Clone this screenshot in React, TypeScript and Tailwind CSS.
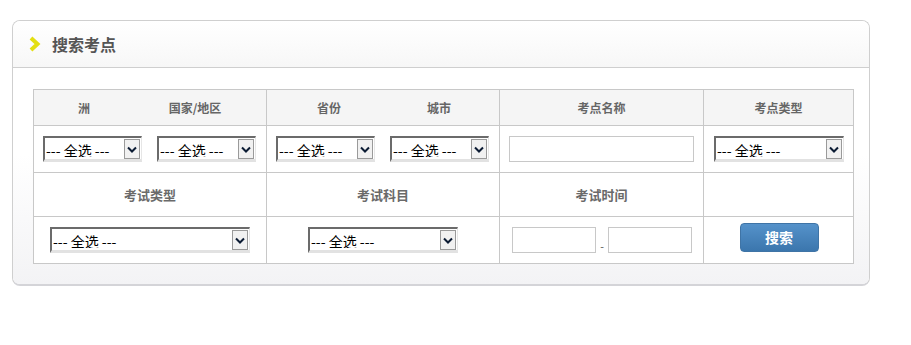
import type { ReactNode } from 'react';

const cjk = "font-['Noto_Sans_CJK_SC','Noto_Sans',sans-serif]";

function Sel({ w }: { w: string }) {
  return (
    <div className={`relative h-[26px] ${w} border-t-2 border-l-2 border-[#6b6b6b] border-r border-r-[#e6e6e6] border-b-[3px] border-b-[#e2e2e2] bg-white`}>
      <select className={`h-full w-full appearance-none bg-transparent pl-[1px] text-[14px] leading-none text-black outline-none ${cjk}`}>
        <option>--- 全选 ---</option>
      </select>
      {/* arrow button */}
      <div className="pointer-events-none absolute right-[1px] top-[1px] bottom-0 flex w-[16px] items-center justify-center border border-[#9a9a9a] bg-[#f1f1f1]">
        <svg width="10" height="7" viewBox="0 0 10 7">
          <path d="M1 1.5 L5 5.5 L9 1.5" fill="none" stroke="#0b1b33" strokeWidth="2" />
        </svg>
      </div>
    </div>
  );
}

function Cell({ children, className = '' }: { children?: ReactNode; className?: string }) {
  return (
    <div className={`flex items-center justify-center border-r border-b border-[#c8c8c8] ${className}`}>
      {children}
    </div>
  );
}

const head = `text-[12px] font-bold text-[#666] ${cjk}`;
const label = `text-[13px] font-bold text-[#6a6a6a] ${cjk}`;

export default function App() {
  return (
    <div className="h-[345px] w-[911px] bg-white pt-[20px] pl-[12px]">
      <div className="w-[858px] overflow-hidden rounded-[8px] border border-[#cfcfcf] border-b-2 border-b-[#d4d4d8]">
        {/* Header */}
        <div className="flex h-[47px] items-center border-b border-[#cfcfcf] bg-gradient-to-b from-white to-[#f7f7f7] pl-[15px]">
          <svg width="14" height="16" viewBox="0 0 14 16" className="mr-[10px]">
            <path d="M3 2 L9.5 8 L3 14" fill="none" stroke="#e3df12" strokeWidth="4" strokeLinejoin="miter" />
          </svg>
          <span className={`text-[16px] font-bold text-[#555] ${cjk}`}>搜索考点</span>
        </div>

        {/* Body */}
        <div className="bg-gradient-to-b from-white from-40% to-[#f3f3f5] px-[20px] pt-[21px] pb-[20px]">
          <div className="grid w-[821px] grid-cols-[233px_233px_204px_150px] grid-rows-[36px_47px_44px_47px] border-l border-t border-[#c8c8c8] bg-white">
            {/* row 1 */}
            <Cell className="justify-start bg-[#f5f5f5]">
              <span className={`w-[100px] text-center ${head}`}>洲</span>
              <span className={`w-[122px] text-center ${head}`}>国家/地区</span>
            </Cell>
            <Cell className="justify-start bg-[#f5f5f5]">
              <span className={`w-[124px] text-center ${head}`}>省份</span>
              <span className={`w-[96px] text-center ${head}`}>城市</span>
            </Cell>
            <Cell className="bg-[#f5f5f5]">
              <span className={head}>考点名称</span>
            </Cell>
            <Cell className="bg-[#f5f5f5]">
              <span className={head}>考点类型</span>
            </Cell>

            {/* row 2 */}
            <Cell className="justify-start gap-[15px] pl-[9px]">
              <Sel w="w-[99px]" />
              <Sel w="w-[99px]" />
            </Cell>
            <Cell className="justify-start gap-[15px] pl-[9px]">
              <Sel w="w-[99px]" />
              <Sel w="w-[99px]" />
            </Cell>
            <Cell>
              <input className="h-[26px] w-[185px] border border-[#c8c8c8] bg-white outline-none" />
            </Cell>
            <Cell className="justify-start pl-[10px]">
              <Sel w="w-[130px]" />
            </Cell>

            {/* row 3 */}
            <Cell>
              <span className={label}>考试类型</span>
            </Cell>
            <Cell>
              <span className={label}>考试科目</span>
            </Cell>
            <Cell>
              <span className={label}>考试时间</span>
            </Cell>
            <Cell />

            {/* row 4 */}
            <Cell className="justify-start pl-[16px]">
              <Sel w="w-[200px]" />
            </Cell>
            <Cell className="justify-start pl-[41px]">
              <Sel w="w-[150px]" />
            </Cell>
            <Cell className="justify-start gap-0 pl-[12px]">
              <input className="h-[26px] w-[84px] border border-[#c8c8c8] bg-white outline-none" />
              <span className="mt-[12px] w-[12px] text-center text-[11px] text-[#666] font-['Liberation_Sans',sans-serif]">-</span>
              <input className="h-[26px] w-[84px] border border-[#c8c8c8] bg-white outline-none" />
            </Cell>
            <Cell>
              <button className={`-mt-[6px] ml-[1px] h-[29px] w-[79px] rounded-[4px] border border-[#3f74a6] bg-gradient-to-b from-[#5592ca] to-[#3b76ad] text-[14px] font-bold text-white ${cjk}`}>
                搜索
              </button>
            </Cell>
          </div>
        </div>
      </div>
    </div>
  );
}
